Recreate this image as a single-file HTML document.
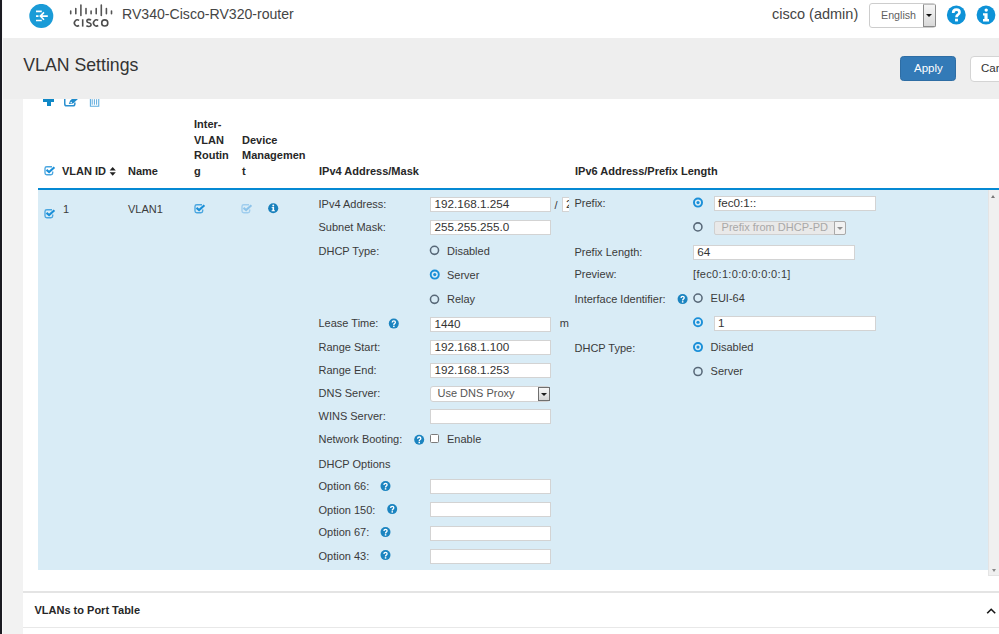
<!DOCTYPE html>
<html><head><meta charset="utf-8">
<style>
*{box-sizing:border-box}
html,body{margin:0;padding:0}
body{width:999px;height:634px;overflow:hidden;position:relative;background:#f2f2f2;font-family:"Liberation Sans",sans-serif;color:#333}
.a{position:absolute}
.t{position:absolute;white-space:nowrap;font-size:11px;line-height:15px;color:#3b3b3b}
.b{font-weight:bold;color:#272727}
.inp{position:absolute;background:#fff;border:1px solid #d3d3d3}
.inp span{position:absolute;left:3px;top:-0.6px;font-size:11.7px;line-height:13px;color:#333}
</style></head><body>
<div class="a" style="left:0;top:0;width:2px;height:634px;background:#1b1b22"></div>
<div class="a" style="left:2px;top:0;width:1px;height:634px;background:#fafafa"></div>
<div class="a" style="left:3px;top:0;width:996px;height:38px;background:#fff"></div>
<div class="a" style="left:3px;top:38px;width:996px;height:60.8px;background:#eeeeee"></div>
<div class="a" style="left:23.2px;top:98.8px;width:976px;height:536px;background:#fff"></div>

<svg class="a" style="left:29px;top:4px" width="25" height="24" viewBox="0 0 25 24">
<circle cx="12.3" cy="11.9" r="12" fill="#1a9bd7"/>
<g stroke="#fff" stroke-width="1.6" fill="none">
<path d="M7 7.4H12.8M7 12.1H9.5M7 16.5H12.8"/>
<path d="M11.5 12.1H18.8M15 8.4L11.3 12.1L15 15.8"/>
</g>
</svg>
<svg class="a" style="left:69px;top:3px" width="45" height="26" viewBox="0 0 45 26">
<g stroke="#555" stroke-width="1.6" stroke-linecap="round">
<path d="M1.7 8V10.7M6.8 5.6V10.7M11.9 2V12.5M17 5.6V10.7M22.1 8V10.7M27.2 5.6V10.7M32.3 2V12.5M37.4 5.6V10.7M42.5 8V10.7"/>
</g>
<g stroke="#4d4d4d" stroke-width="1.6" fill="none">
<path d="M10.1 17.4A3.05 3.05 0 1 0 10.1 22.5"/>
<path d="M13.7 16.3V23.6"/>
<path d="M22 17.2Q21 16.4 19.7 16.4Q17.8 16.5 17.9 18.2Q18 19.4 19.9 19.8Q22.1 20.3 22.1 21.8Q22 23.5 19.8 23.5Q18.4 23.5 17.4 22.6"/>
<path d="M29.2 17.4A3.05 3.05 0 1 0 29.2 22.5"/>
<circle cx="35.75" cy="19.95" r="3.05"/>
</g>
</svg>
<div class="t" style="left:122px;top:4.8px;font-size:14.1px;line-height:18px;color:#454545">RV340-Cisco-RV320-router</div>
<div class="t" style="left:772px;top:5px;font-size:14.5px;line-height:18px;color:#454545">cisco (admin)</div>
<div class="a" style="left:869px;top:3.4px;width:67px;height:24.2px;border:1px solid #cdcdcd;border-radius:3px;background:#fff"></div>
<div class="t" style="left:881px;top:8px;font-size:10.7px;color:#5f5f5f">English</div>
<div class="a" style="left:923.2px;top:4px;width:12.6px;height:23.2px;border:1px solid #8a8a8a;border-top-color:#bdbdbd;border-radius:0 2px 2px 0;background:linear-gradient(#f6f6f6,#d9d9d9)"></div>
<div class="a" style="left:925.9px;top:13.6px;width:0;height:0;border-left:3.3px solid transparent;border-right:3.3px solid transparent;border-top:3.7px solid #111"></div>
<svg class="a" style="left:946px;top:5px" width="21" height="21" viewBox="0 0 21 21">
<circle cx="10.3" cy="10" r="9.4" fill="#0e92d7"/>
<path d="M7.2 7.9Q7.2 4.6 10.4 4.6Q13.5 4.6 13.5 7.3Q13.5 8.8 12 9.7Q10.5 10.5 10.5 12.2" stroke="#fff" stroke-width="2.7" fill="none"/>
<rect x="9.05" y="13.7" width="2.9" height="2.7" fill="#fff"/>
</svg>
<svg class="a" style="left:976px;top:5px" width="21" height="21" viewBox="0 0 21 21">
<circle cx="10" cy="10" r="9.4" fill="#0e92d7"/>
<circle cx="10.2" cy="5.1" r="1.7" fill="#fff"/>
<path d="M7 8.2H11.6V14H13V16.4H7V14H8.4V10.5H7Z" fill="#fff"/>
</svg>

<div class="t" style="left:23.3px;top:54.6px;font-size:17.7px;line-height:20px;color:#333">VLAN Settings</div>
<div class="a" style="left:900px;top:56px;width:56.3px;height:25.4px;background:#337ab7;border:1px solid #2e6da4;border-radius:3.5px"></div>
<div class="t" style="left:914px;top:61px;font-size:11.5px;line-height:15px;color:#fff">Apply</div>
<div class="a" style="left:970px;top:56.2px;width:40px;height:25.4px;background:#fff;border:1px solid #d4d4d4;border-radius:4px"></div>
<div class="t" style="left:981px;top:61px;font-size:11.5px;line-height:15px;color:#333">Cancel</div>

<div class="a" style="left:23.2px;top:98.8px;width:100px;height:12px;overflow:hidden">
 <div class="a" style="left:19.4px;top:0.5px;width:11.5px;height:2.4px;background:#1088c6"></div>
 <div class="a" style="left:23.6px;top:0;width:3.8px;height:7.1px;background:#1088c6"></div>
 <svg class="a" style="left:39.8px;top:-5.8px" width="17" height="15" viewBox="0 0 17 15">
  <path d="M1.75 4V11Q1.75 12.8 3.5 12.8H10Q11.85 12.8 11.85 11V9.5" stroke="#2a90d0" stroke-width="1.5" fill="none"/>
  <path d="M5.8 11L7 7.8L12.5 2.5L15.5 5.5L10 10.5Z" fill="#1f8bcb"/>
  <circle cx="8.2" cy="9.4" r="0.75" fill="#fff"/>
 </svg>
 <svg class="a" style="left:65.8px;top:-5.8px" width="12" height="15" viewBox="0 0 12 15">
  <path d="M1.4 3V13.3H9.75V3" stroke="#5eaee0" stroke-width="1.1" fill="none"/>
  <path d="M3.2 6.2V11.7M5.4 6.2V11.7M7.6 6.2V11.7" stroke="#4fa2d8" stroke-width="0.9"/>
 </svg>
</div>

<svg class="a" style="left:43px;top:164px" width="13" height="13" viewBox="0 0 13 13"><path d="M9 2.7H3.8Q2 2.7 2 4.5V8.9Q2 10.7 3.8 10.7H7.9Q9.7 10.7 9.7 8.9V7.6" stroke="#4aa6e0" stroke-width="1.35" fill="none"/><path d="M3.5 5.9L6.1 8.1L11.4 3.3" stroke="#1a8fd8" stroke-width="2.1" fill="none"/></svg>
<div class="t b" style="left:62px;top:164px">VLAN ID</div>
<svg class="a" style="left:109px;top:166px" width="8" height="11" viewBox="0 0 8 11">
 <path d="M0.6 4.6L3.7 1L6.8 4.6Z M0.6 6.2L3.7 9.8L6.8 6.2Z" fill="#222"/>
</svg>
<div class="t b" style="left:128px;top:164px">Name</div>
<div class="t b" style="left:194px;top:117px;line-height:15.7px">Inter-<br>VLAN<br>Routin<br>g</div>
<div class="t b" style="left:242px;top:132.7px;line-height:15.7px">Device<br>Managemen<br>t</div>
<div class="t b" style="left:319px;top:164px">IPv4 Address/Mask</div>
<div class="t b" style="left:575px;top:164px">IPv6 Address/Prefix Length</div>

<div class="a" style="left:38px;top:187.7px;width:961px;height:2.3px;background:#0589d3"></div>
<div class="a" style="left:38px;top:190px;width:949.5px;height:380px;background:#d9ecf6"></div>
<div class="a" style="left:987.5px;top:190px;width:12px;height:385.5px;background:#f0f0f0;border-left:1px solid #e4e4e4;border-bottom:1px solid #e4e4e4"></div>
<div class="a" style="left:991.3px;top:194.8px;width:0;height:0;border-left:2.9px solid transparent;border-right:2.9px solid transparent;border-bottom:3px solid #7a7a7a"></div>
<div class="a" style="left:991.6px;top:568.5px;width:0;height:0;border-left:2.7px solid transparent;border-right:2.7px solid transparent;border-top:3px solid #8a8a8a"></div>

<svg class="a" style="left:43px;top:206.5px" width="13" height="13" viewBox="0 0 13 13"><path d="M9 2.7H3.8Q2 2.7 2 4.5V8.9Q2 10.7 3.8 10.7H7.9Q9.7 10.7 9.7 8.9V7.6" stroke="#4aa6e0" stroke-width="1.35" fill="none"/><path d="M3.5 5.9L6.1 8.1L11.4 3.3" stroke="#1a8fd8" stroke-width="2.1" fill="none"/></svg><svg class="a" style="left:192.7px;top:201.6px" width="13" height="13" viewBox="0 0 13 13"><path d="M9 2.7H3.8Q2 2.7 2 4.5V8.9Q2 10.7 3.8 10.7H7.9Q9.7 10.7 9.7 8.9V7.6" stroke="#4aa6e0" stroke-width="1.35" fill="none"/><path d="M3.5 5.9L6.1 8.1L11.4 3.3" stroke="#1a8fd8" stroke-width="2.1" fill="none"/></svg><svg class="a" style="left:240.4px;top:201.6px" width="13" height="13" viewBox="0 0 13 13"><path d="M9 2.7H3.8Q2 2.7 2 4.5V8.9Q2 10.7 3.8 10.7H7.9Q9.7 10.7 9.7 8.9V7.6" stroke="#9fcdee" stroke-width="1.35" fill="none"/><path d="M3.5 5.9L6.1 8.1L11.4 3.3" stroke="#8ec4ea" stroke-width="2.1" fill="none"/></svg>
<div class="t" style="left:63px;top:201.5px">1</div>
<div class="t" style="left:128px;top:201.5px">VLAN1</div>
<svg class="a" style="left:268px;top:203px" width="11" height="11" viewBox="0 0 11 11">
 <circle cx="5.2" cy="5.2" r="5.05" fill="#1880bc"/>
 <circle cx="5.25" cy="2.5" r="0.95" fill="#fff"/>
 <path d="M3.6 3.9H6.1V7.3H6.9V8.2H3.6V7.3H4.5V4.8H3.6Z" fill="#fff"/>
</svg>

<div class="t" style="left:318.5px;top:197px;">IPv4 Address:</div>
<div class="inp" style="left:430.4px;top:197px;width:120.2px;height:15px"><span>192.168.1.254</span></div>
<div class="t" style="left:554.5px;top:198px;">/</div>
<div class="a" style="left:561.5px;top:197px;width:7.3px;height:15px;overflow:hidden"><div class="inp" style="left:0px;top:0px;width:30px;height:15px"><span><b style="font-weight:normal;position:relative;left:0.6px">24</b></span></div></div>
<div class="t" style="left:318.5px;top:220px;">Subnet Mask:</div>
<div class="inp" style="left:430.4px;top:220px;width:120.2px;height:15px"><span>255.255.255.0</span></div>
<div class="t" style="left:318.5px;top:244px;">DHCP Type:</div>
<svg class="a" style="left:428px;top:244px" width="12" height="12" viewBox="0 0 12 12"><circle cx="6.5" cy="6.3" r="4.05" stroke="#586878" stroke-width="1.55" fill="none"/></svg>
<div class="t" style="left:447px;top:244px;">Disabled</div>
<svg class="a" style="left:428px;top:268px" width="12" height="12" viewBox="0 0 12 12"><circle cx="6.75" cy="6.6" r="4.05" stroke="#1a8fd8" stroke-width="1.9" fill="none"/><circle cx="6.75" cy="6.6" r="1.55" fill="#1a8fd8"/></svg>
<div class="t" style="left:447px;top:268px;">Server</div>
<svg class="a" style="left:428px;top:293px" width="12" height="12" viewBox="0 0 12 12"><circle cx="6.5" cy="6.3" r="4.05" stroke="#586878" stroke-width="1.55" fill="none"/></svg>
<div class="t" style="left:447px;top:292px;">Relay</div>
<div class="t" style="left:318.5px;top:316px;">Lease Time:</div>
<svg class="a" style="left:387px;top:317px" width="12" height="12" viewBox="0 0 12 12"><g transform="translate(1.8 1.6)"><circle cx="5" cy="5" r="5" fill="#1b84c0"/><path d="M3.45 3.95Q3.45 2.2 5.05 2.2Q6.6 2.2 6.6 3.6Q6.6 4.45 5.75 4.95Q5.05 5.35 5.05 6.35" stroke="#fff" stroke-width="1.35" fill="none"/><rect x="4.3" y="7.05" width="1.5" height="1.45" fill="#fff"/></g></svg>
<div class="inp" style="left:430.4px;top:317px;width:120.2px;height:15px"><span>1440</span></div>
<div class="t" style="left:559.7px;top:316px;">m</div>
<div class="t" style="left:318.5px;top:340px;">Range Start:</div>
<div class="inp" style="left:430.4px;top:340px;width:120.2px;height:15px"><span>192.168.1.100</span></div>
<div class="t" style="left:318.5px;top:363px;">Range End:</div>
<div class="inp" style="left:430.4px;top:363px;width:120.2px;height:15px"><span>192.168.1.253</span></div>
<div class="t" style="left:318.5px;top:386px;">DNS Server:</div>
<div class="a" style="left:430.4px;top:386.4px;width:120px;height:15.2px;background:#fff;border:1px solid #d2d2d2;border-radius:3px"></div>
<div class="t" style="left:437.5px;top:386px;color:#555">Use DNS Proxy</div>
<div class="a" style="left:537.5px;top:387.3px;width:12.5px;height:13.5px;border:1px solid #6f6f6f;background:linear-gradient(#f7f7f7,#d4d4d4)"></div>
<div class="a" style="left:540.9px;top:392.6px;width:0;height:0;border-left:3px solid transparent;border-right:3px solid transparent;border-top:3.3px solid #1a1a1a"></div>
<div class="t" style="left:318.5px;top:409px;">WINS Server:</div>
<div class="inp" style="left:430.4px;top:409px;width:120.2px;height:15px"></div>
<div class="t" style="left:318.5px;top:432px;">Network Booting:</div>
<svg class="a" style="left:413px;top:433px" width="12" height="12" viewBox="0 0 12 12"><g transform="translate(1.2 1.8)"><circle cx="5" cy="5" r="5" fill="#1b84c0"/><path d="M3.45 3.95Q3.45 2.2 5.05 2.2Q6.6 2.2 6.6 3.6Q6.6 4.45 5.75 4.95Q5.05 5.35 5.05 6.35" stroke="#fff" stroke-width="1.35" fill="none"/><rect x="4.3" y="7.05" width="1.5" height="1.45" fill="#fff"/></g></svg>
<div class="a" style="left:429.9px;top:434.2px;width:8.8px;height:8.6px;border:1.1px solid #7b7b7b;background:#fff;border-radius:1.5px"></div>
<div class="t" style="left:447px;top:432px;">Enable</div>
<div class="t" style="left:318.5px;top:457px;">DHCP Options</div>
<div class="t" style="left:318.5px;top:479px;">Option 66:</div>
<svg class="a" style="left:379px;top:480px" width="12" height="12" viewBox="0 0 12 12"><g transform="translate(1.5 1.1)"><circle cx="5" cy="5" r="5" fill="#1b84c0"/><path d="M3.45 3.95Q3.45 2.2 5.05 2.2Q6.6 2.2 6.6 3.6Q6.6 4.45 5.75 4.95Q5.05 5.35 5.05 6.35" stroke="#fff" stroke-width="1.35" fill="none"/><rect x="4.3" y="7.05" width="1.5" height="1.45" fill="#fff"/></g></svg>
<div class="inp" style="left:430.4px;top:479px;width:120.2px;height:15px"></div>
<div class="t" style="left:318.5px;top:503px;">Option 150:</div>
<svg class="a" style="left:386px;top:503px" width="12" height="12" viewBox="0 0 12 12"><g transform="translate(1.2 1.1)"><circle cx="5" cy="5" r="5" fill="#1b84c0"/><path d="M3.45 3.95Q3.45 2.2 5.05 2.2Q6.6 2.2 6.6 3.6Q6.6 4.45 5.75 4.95Q5.05 5.35 5.05 6.35" stroke="#fff" stroke-width="1.35" fill="none"/><rect x="4.3" y="7.05" width="1.5" height="1.45" fill="#fff"/></g></svg>
<div class="inp" style="left:430.4px;top:502px;width:120.2px;height:15px"></div>
<div class="t" style="left:318.5px;top:525px;">Option 67:</div>
<svg class="a" style="left:379px;top:526px" width="12" height="12" viewBox="0 0 12 12"><g transform="translate(1.5 1.1)"><circle cx="5" cy="5" r="5" fill="#1b84c0"/><path d="M3.45 3.95Q3.45 2.2 5.05 2.2Q6.6 2.2 6.6 3.6Q6.6 4.45 5.75 4.95Q5.05 5.35 5.05 6.35" stroke="#fff" stroke-width="1.35" fill="none"/><rect x="4.3" y="7.05" width="1.5" height="1.45" fill="#fff"/></g></svg>
<div class="inp" style="left:430.4px;top:526px;width:120.2px;height:15px"></div>
<div class="t" style="left:318.5px;top:549px;">Option 43:</div>
<svg class="a" style="left:379px;top:549px" width="12" height="12" viewBox="0 0 12 12"><g transform="translate(1.5 1.1)"><circle cx="5" cy="5" r="5" fill="#1b84c0"/><path d="M3.45 3.95Q3.45 2.2 5.05 2.2Q6.6 2.2 6.6 3.6Q6.6 4.45 5.75 4.95Q5.05 5.35 5.05 6.35" stroke="#fff" stroke-width="1.35" fill="none"/><rect x="4.3" y="7.05" width="1.5" height="1.45" fill="#fff"/></g></svg>
<div class="inp" style="left:430.4px;top:549px;width:120.2px;height:15px"></div>
<div class="t" style="left:574.5px;top:196px;">Prefix:</div>
<svg class="a" style="left:692px;top:196px" width="12" height="12" viewBox="0 0 12 12"><circle cx="6" cy="6.6" r="4.05" stroke="#1a8fd8" stroke-width="1.9" fill="none"/><circle cx="6" cy="6.6" r="1.55" fill="#1a8fd8"/></svg>
<div class="inp" style="left:714px;top:196px;width:162px;height:15px"><span>fec0:1::</span></div>
<svg class="a" style="left:691px;top:220px" width="12" height="12" viewBox="0 0 12 12"><circle cx="6.9" cy="6.9" r="4.05" stroke="#586878" stroke-width="1.55" fill="none"/></svg>
<div class="a" style="left:714px;top:220.6px;width:132px;height:14.4px;background:#e9e9e9;border:1px solid #d0d0d0;border-radius:2px"></div>
<div class="t" style="left:721.6px;top:220px;color:#a8a8a8">Prefix from DHCP-PD</div>
<div class="a" style="left:833.6px;top:221.2px;width:12.4px;height:13.6px;border:1px solid #a9a9a9;background:#f2f2f2;border-radius:0 2px 2px 0"></div>
<div class="a" style="left:837px;top:226.5px;width:0;height:0;border-left:3px solid transparent;border-right:3px solid transparent;border-top:3.2px solid #8f8f8f"></div>
<div class="t" style="left:574.5px;top:245px;">Prefix Length:</div>
<div class="inp" style="left:693.3px;top:245px;width:161.5px;height:15px"><span>64</span></div>
<div class="t" style="left:574.5px;top:267px;">Preview:</div>
<div class="t" style="left:693px;top:267px;letter-spacing:0.33px">[fec0:1:0:0:0:0:0:1]</div>
<div class="t" style="left:574.5px;top:292px;">Interface Identifier:</div>
<svg class="a" style="left:676px;top:293px" width="12" height="12" viewBox="0 0 12 12"><g transform="translate(1.6 1.1)"><circle cx="5" cy="5" r="5" fill="#1b84c0"/><path d="M3.45 3.95Q3.45 2.2 5.05 2.2Q6.6 2.2 6.6 3.6Q6.6 4.45 5.75 4.95Q5.05 5.35 5.05 6.35" stroke="#fff" stroke-width="1.35" fill="none"/><rect x="4.3" y="7.05" width="1.5" height="1.45" fill="#fff"/></g></svg>
<svg class="a" style="left:692px;top:292px" width="12" height="12" viewBox="0 0 12 12"><circle cx="6" cy="6.1" r="4.05" stroke="#586878" stroke-width="1.55" fill="none"/></svg>
<div class="t" style="left:710.6px;top:291px;">EUI-64</div>
<svg class="a" style="left:692px;top:316px" width="12" height="12" viewBox="0 0 12 12"><circle cx="6" cy="6.2" r="4.05" stroke="#1a8fd8" stroke-width="1.9" fill="none"/><circle cx="6" cy="6.2" r="1.55" fill="#1a8fd8"/></svg>
<div class="inp" style="left:714px;top:316px;width:162px;height:15px"><span>1</span></div>
<div class="t" style="left:574.5px;top:341px;">DHCP Type:</div>
<svg class="a" style="left:692px;top:341px" width="12" height="12" viewBox="0 0 12 12"><circle cx="6" cy="6.1" r="4.05" stroke="#1a8fd8" stroke-width="1.9" fill="none"/><circle cx="6" cy="6.1" r="1.55" fill="#1a8fd8"/></svg>
<div class="t" style="left:710.6px;top:340px;">Disabled</div>
<svg class="a" style="left:692px;top:365px" width="12" height="12" viewBox="0 0 12 12"><circle cx="6" cy="6.5" r="4.05" stroke="#586878" stroke-width="1.55" fill="none"/></svg>
<div class="t" style="left:710.6px;top:364px;">Server</div>

<div class="a" style="left:23.2px;top:591px;width:976px;height:2px;background:#e4e4e4"></div>
<div class="t b" style="left:34.5px;top:602.5px">VLANs to Port Table</div>
<svg class="a" style="left:986px;top:607px" width="11" height="8" viewBox="0 0 11 8">
 <path d="M1.2 6.3L5.2 2.3L9.2 6.3" stroke="#151515" stroke-width="1.6" fill="none"/>
</svg>
<div class="a" style="left:23.2px;top:627px;width:976px;height:1px;background:#e8e8e8"></div>
</body></html>
